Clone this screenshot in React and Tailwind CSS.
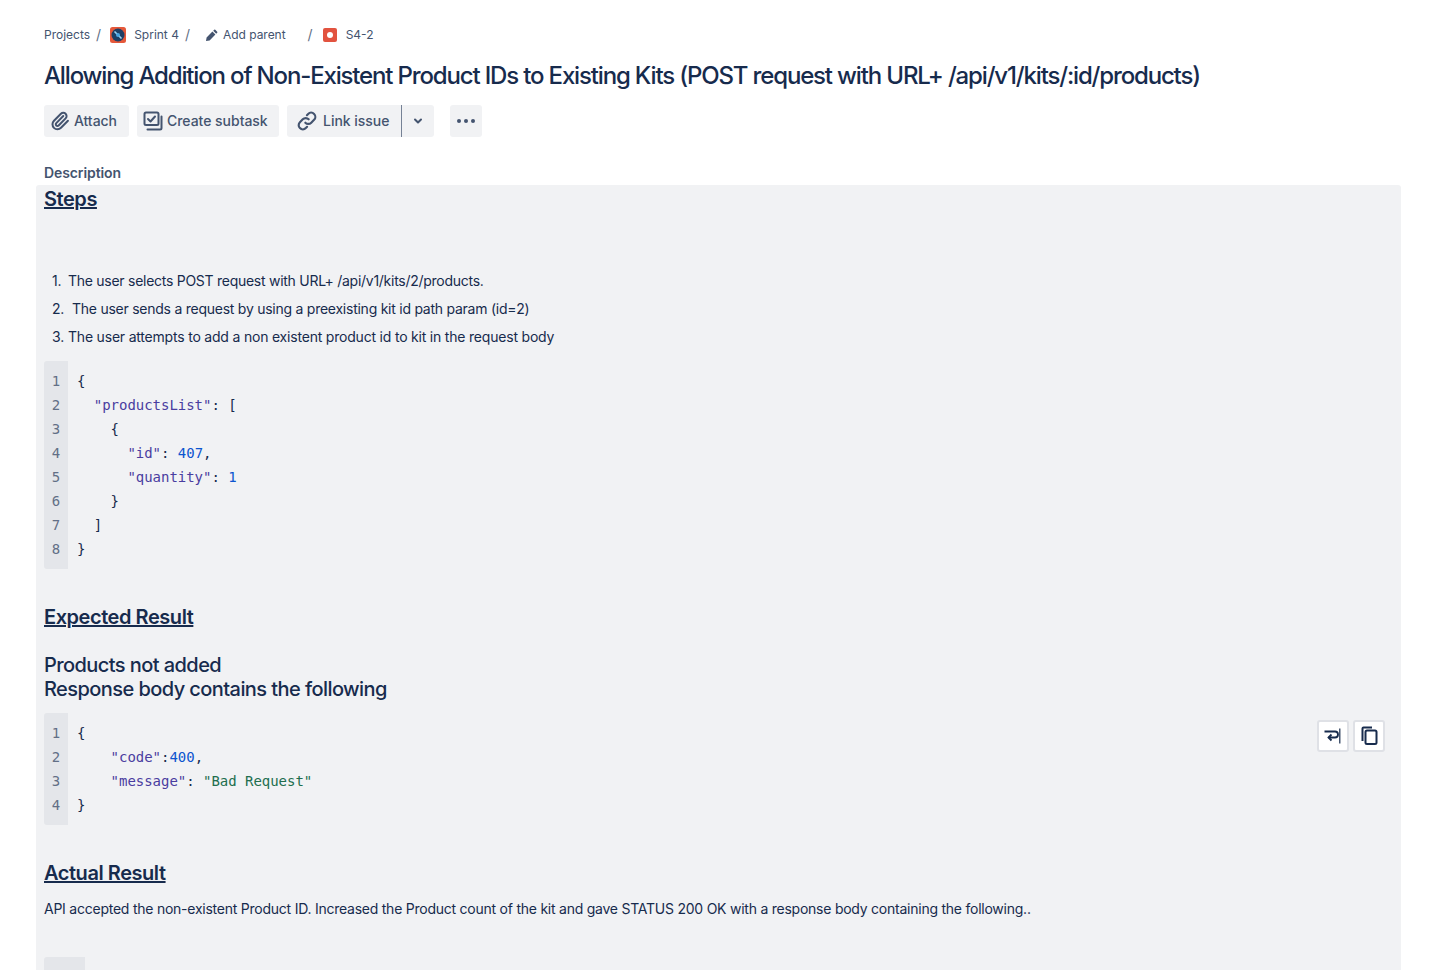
import React from "react";

const K = ({ children }) => <span className="text-[#4a3da0]">{children}</span>;
const N = ({ children }) => <span className="text-[#0c55cf]">{children}</span>;
const S = ({ children }) => <span className="text-[#216e4e]">{children}</span>;

function Code({ lines }) {
  return (
    <div className="flex font-['DejaVu_Sans_Mono',monospace] text-[14px] leading-[24px] text-[#172b4d] tracking-[-0.03px]">
      <div className="w-6 bg-[#e4e6ea] rounded-l-[3px] py-2 text-center text-[#626f86]">
        {lines.map((_, i) => (
          <div key={i} className="h-6">{i + 1}</div>
        ))}
      </div>
      <div className="pl-[9px] py-2">
        {lines.map((l, i) => (
          <div key={i} className="h-6 whitespace-pre">{l}</div>
        ))}
      </div>
    </div>
  );
}

function Btn({ icon, label, className = "" }) {
  return (
    <div className={"h-8 flex items-center bg-[#f1f2f4] rounded-[3px] text-[14px] font-medium text-[#44546f] tracking-[-0.03px] " + className}>
      {icon}
      <span className="-mt-[2px]">{label}</span>
    </div>
  );
}

const Paperclip = () => (
  <svg width="20" height="20" viewBox="0 0 24 24" fill="none" stroke="#44546f" strokeWidth="2.4" strokeLinecap="round" strokeLinejoin="round">
    <path d="m16 6-8.414 8.586a2 2 0 0 0 2.829 2.829l8.414-8.586a4 4 0 1 0-5.657-5.657l-8.379 8.551a6 6 0 1 0 8.485 8.485l8.379-8.551" />
  </svg>
);
const Subtask = () => (
  <svg width="20" height="20" viewBox="0 0 20 20" fill="none" stroke="#44546f" strokeWidth="2" strokeLinecap="round" strokeLinejoin="round">
    <rect x="1.5" y="1.5" width="14" height="12.5" rx="1.5" />
    <path d="M5 8l2.5 2.5L12 5.5" />
    <path d="M18.5 5.5v11.5a1.5 1.5 0 0 1-1.5 1.5H4.5" />
  </svg>
);
const LinkIco = () => (
  <svg width="20" height="20" viewBox="0 0 24 24" fill="none" stroke="#44546f" strokeWidth="2.6" strokeLinecap="round" strokeLinejoin="round">
    <path d="M10 14a5 5 0 0 0 7.1 0l3.4-3.4a5 5 0 0 0-7.1-7.1l-1.5 1.5" />
    <path d="M14 10a5 5 0 0 0-7.1 0l-3.4 3.4a5 5 0 0 0 7.1 7.1l1.5-1.5" />
  </svg>
);

const Sep = ({ className = "" }) => <span className={"text-[14px] text-[#626f86] " + className}>/</span>;

const heading = "text-[20px] leading-[28px] font-semibold underline tracking-[-0.45px]";

export default function App() {
  return (
    <div className="h-[970px] overflow-hidden bg-white font-['Inter',sans-serif] text-[#172b4d]">
      <div className="pl-11 pt-[24px] h-[22px] box-content flex items-center text-[12px] text-[#44546f] leading-[22px]">
        <span>Projects</span>
        <Sep className="ml-[6px]" />
        <svg className="ml-[9px]" width="16" height="16" viewBox="0 0 16 16">
          <rect width="16" height="16" rx="2.5" fill="#e5583a" />
          <circle cx="8" cy="8" r="6.5" fill="#1d3f66" />
          <path d="M4.5 4.5l7 7" stroke="#9fd4f2" strokeWidth="1.6" />
          <circle cx="8" cy="8" r="2" fill="#4aa3e0" />
        </svg>
        <span className="ml-2">Sprint 4</span>
        <Sep className="ml-[6px]" />
        <svg className="ml-[15px]" width="13" height="13" viewBox="0 0 13 13">
          <path d="M1 12l.6-3.6 5.8-5.8 3 3-5.8 5.8zM8.2 1.8l1-1a.8.8 0 0 1 1.1 0l1.9 1.9a.8.8 0 0 1 0 1.1l-1 1z" fill="#44546f" />
        </svg>
        <span className="ml-[5px] tracking-[-0.03px]">Add parent</span>
        <Sep className="ml-[22px]" />
        <svg className="ml-[10px]" width="14" height="14" viewBox="0 0 14 14">
          <rect width="14" height="14" rx="2" fill="#e2533f" />
          <circle cx="7" cy="7" r="3" fill="#fff" />
        </svg>
        <span className="ml-[9px]">S4-2</span>
      </div>

      <h1 className="pl-11 mt-[14px] text-[24px] leading-[32px] font-[550] tracking-[-1.16px] text-[#172b4d] whitespace-nowrap">
        Allowing Addition of Non-Existent Product IDs to Existing Kits (POST request with URL+ /api/v1/kits/:id/products)
      </h1>

      <div className="pl-11 mt-[13px] flex">
        <Btn icon={<Paperclip />} label="Attach" className="pl-[6px] pr-3 gap-[4px] w-[85px]" />
        <Btn icon={<Subtask />} label="Create subtask" className="ml-2 pl-[6px] gap-[4px] w-[142px]" />
        <Btn icon={<LinkIco />} label="Link issue" className="ml-2 pl-[10px] gap-[6px] w-[115px] rounded-r-none border-r border-[#758195]" />
        <div className="h-8 w-8 flex items-center justify-center bg-[#f1f2f4] rounded-r-[3px]">
          <svg width="10" height="10" viewBox="0 0 10 10" fill="none" stroke="#44546f" strokeWidth="2" strokeLinecap="round" strokeLinejoin="round">
            <path d="M2 3.5L5 6.5L8 3.5" />
          </svg>
        </div>
        <div className="ml-4 h-8 w-8 flex items-center justify-center gap-[3px] bg-[#f1f2f4] rounded-[3px]">
          <span className="w-1 h-1 rounded-full bg-[#44546f]" />
          <span className="w-1 h-1 rounded-full bg-[#44546f]" />
          <span className="w-1 h-1 rounded-full bg-[#44546f]" />
        </div>
      </div>

      <div className="pl-11 mt-[26px] mb-[2px] h-5 text-[14px] leading-5 font-semibold tracking-[-0.1px] text-[#44546f]">Description</div>

      <div className="relative ml-9 w-[1365px] bg-[#f1f2f4] rounded-t-[3px] px-2 pb-8">
        <h2 className={heading}>Steps</h2>

        <ol className="mt-[54px] text-[14px] leading-[20px]">
          <li className="h-7 flex items-center pl-2 tracking-[-0.27px]"><span className="w-4">1.</span>The user selects POST request with URL+ /api/v1/kits/2/products.</li>
          <li className="h-7 flex items-center pl-2 tracking-[-0.25px]"><span className="w-5">2.</span>The user sends a request by using a preexisting kit id path param (id=2)</li>
          <li className="h-7 flex items-center pl-2 tracking-[-0.2px]"><span className="w-4">3.</span>The user attempts to add a non existent product id to kit in the request body</li>
        </ol>

        <div className="mt-[10px]">
          <Code
            lines={[
              "{",
              <>  <K>"productsList"</K>: [</>,
              "    {",
              <>      <K>"id"</K>: <N>407</N>,</>,
              <>      <K>"quantity"</K>: <N>1</N></>,
              "    }",
              "  ]",
              "}",
            ]}
          />
        </div>

        <h2 className={"mt-[34px] " + heading}>Expected Result</h2>

        <div className="mt-[22px] text-[20px] leading-[24px] font-medium tracking-[-0.57px]">
          <div>Products not added</div>
          <div>Response body contains the following</div>
        </div>

        <div className="relative mt-[12px]">
          <Code
            lines={[
              "{",
              <>    <K>"code"</K>:<N>400</N>,</>,
              <>    <K>"message"</K>: <S>"Bad Request"</S></>,
              "}",
            ]}
          />
          <div className="absolute top-[7px] right-2 flex gap-[4px]">
            <div className="w-8 h-8 bg-white rounded-[3px] border-2 border-[#dfe1e6] flex items-center justify-center">
              <svg width="20" height="20" viewBox="0 0 20 20" fill="none" stroke="#172b4d" strokeWidth="1.8">
                <path d="M1.5 5.5h10.5a3 3 0 0 1 0 6H5.5" />
                <path d="M8.5 8.5L5.5 11.5L8.5 14.5" />
                <path d="M16.8 2.5v15" strokeWidth="1.2" />
              </svg>
            </div>
            <div className="w-8 h-8 bg-white rounded-[3px] border-2 border-[#dfe1e6] flex items-center justify-center">
              <svg width="20" height="20" viewBox="0 0 20 20" fill="none" stroke="#172b4d" strokeWidth="2">
                <rect x="6.5" y="4.5" width="11" height="13.5" rx="1.5" />
                <path d="M3.5 15V2.5a1 1 0 0 1 1-1H13" />
              </svg>
            </div>
          </div>
        </div>

        <h2 className={"mt-[34px] " + heading}>Actual Result</h2>

        <p className="mt-[12px] text-[14px] leading-[20px] tracking-[-0.24px]">
          API accepted the non-existent Product ID. Increased the Product count of the kit and gave STATUS 200 OK with a response body containing the following..
        </p>

        <div className="mt-[38px] w-[41px] h-[60px] bg-[#e4e6ea] rounded-l-[3px]" />
      </div>
    </div>
  );
}
